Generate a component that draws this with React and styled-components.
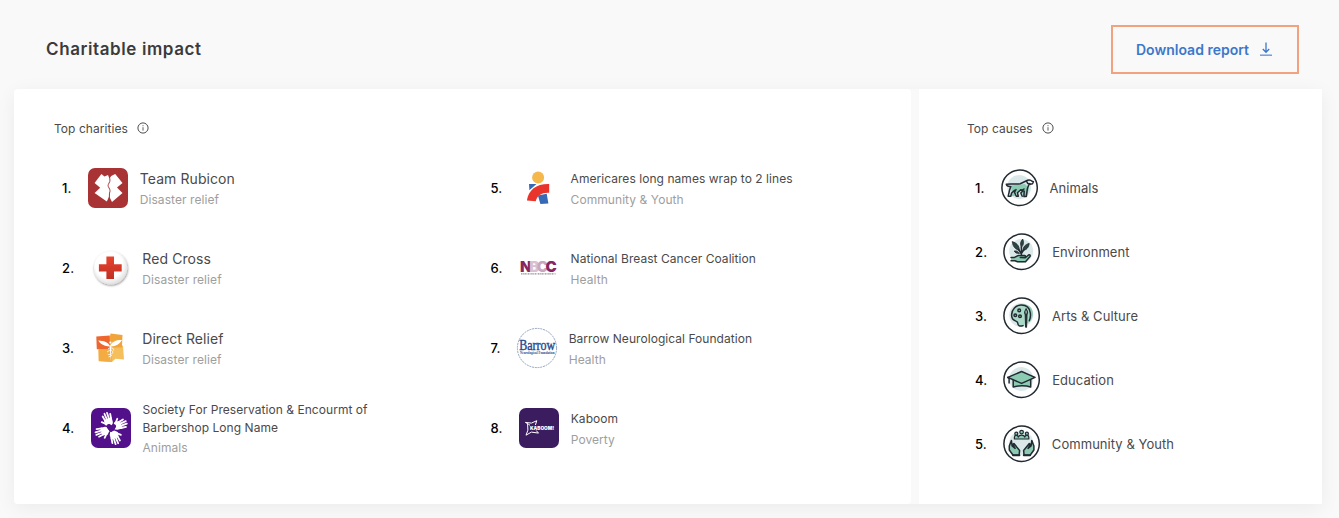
import React from "react";
import styled, { createGlobalStyle } from "styled-components";

const GlobalStyle = createGlobalStyle`
  * { box-sizing: border-box; }
  body {
    margin: 0;
    background: #f9f9f9;
    font-family: Inter, "Liberation Sans", sans-serif;
    color: #4a4a4a;
  }
`;

const Page = styled.main`
  height: 518px;
  padding: 25px 17px 0 14px;
  overflow: hidden;
`;

const Header = styled.header`
  display: flex;
  align-items: center;
  justify-content: space-between;
  height: 49px;
  padding: 0 23px 0 32px;
  margin-bottom: 15px;
`;

const Title = styled.h1`
  margin: 0 0 2px;
  font-size: 17px;
  line-height: 24px;
  font-weight: 600;
  letter-spacing: 0.6px;
  color: #3b3b3b;
`;

const DownloadButton = styled.button`
  display: flex;
  align-items: center;
  gap: 10px;
  width: 188px;
  height: 49px;
  padding: 0 0 0 23px;
  border: 2px solid #f2a27e;
  background: transparent;
  font: 600 14px/20px Inter, "Liberation Sans", sans-serif;
  letter-spacing: 0.01px;
  color: #3b77cb;
`;

const Panels = styled.div`
  display: flex;
  gap: 8px;
  height: 415px;
  border-radius: 4px 0 0 4px;
  box-shadow: 0 4px 20px rgba(0, 0, 0, 0.06);
`;

const Panel = styled.section`
  flex: 0 0 ${(p) => p.$width}px;
  padding: 29px 0 0 ${(p) => p.$inset}px;
  border-radius: ${(p) => p.$radius || 0}px;
  background: #fff;
`;

const PanelTitle = styled.h2`
  display: flex;
  align-items: center;
  gap: 9px;
  height: 20px;
  margin: 0 0 10px;
  font-size: 12px;
  font-weight: 400;
  letter-spacing: 0.05px;
  color: #4a4a4a;
`;

const Columns = styled.div`
  display: flex;
`;

const List = styled.ol`
  width: ${(p) => p.$width}px;
  margin: 0;
  padding: 0 0 0 8px;
  list-style: none;
`;

const Row = styled.li`
  display: flex;
  align-items: center;
  height: ${(p) => p.$height}px;
`;

const Rank = styled.span`
  margin-right: ${(p) => p.$gap || 16.3}px;
  font-size: 13px;
  font-weight: 500;
  letter-spacing: 0.1px;
  color: #000;
`;

const Logo = styled.svg`
  flex: none;
  display: block;
  width: ${(p) => p.$size}px;
  height: ${(p) => p.$size}px;
  margin-right: ${(p) => p.$gap}px;
  overflow: visible;
`;

const Details = styled.div`
  display: flex;
  flex-direction: column;
  gap: ${(p) => (p.$tight ? 2 : 3)}px;
  padding-top: 2px;
`;

const Name = styled.span`
  font-size: ${(p) => (p.$large ? 14 : 12)}px;
  line-height: 18px;
  letter-spacing: ${(p) => (p.$large ? 0.08 : 0.05)}px;
  white-space: pre-line;
  color: #4a4a4a;
`;

const Category = styled.span`
  font-size: 12px;
  line-height: 18px;
  letter-spacing: 0.07px;
  color: #9e9e9e;
`;

const CauseName = styled.span`
  font-size: 13px;
  line-height: 18px;
  letter-spacing: 0.05px;
  color: #4a4a4a;
`;

const DownloadIcon = () => (
  <svg width="14" height="16" viewBox="0 0 14 16" fill="none" stroke="#3b77cb">
    <path d="M7 .5v9.8M3.8 7 7 10.3 10.2 7" strokeWidth="1.3" />
    <path d="M1 13.2h12" stroke="#6f9fdb" strokeWidth="1.5" />
  </svg>
);

const InfoIcon = () => (
  <svg width="12" height="12" viewBox="0 0 12 12" fill="none" stroke="#4d4d4d">
    <circle cx="6" cy="6" r="5.1" />
    <path d="M6 5.2v3.4M6 3.2v1" strokeWidth="0.9" />
  </svg>
);

const Rubicon = () => (
  <>
    <rect width="40" height="40" rx="7" fill="#a93235" />
    <path
      fill="#fff"
      d="M13.4 6 16.5 8.4 20 7l1.4 3.4L23.2 8l4-2L34.5 15 29 19.6l5.5 5.4L24 34l-2.8-5.4-2.4 5L6.6 25l5.6-5.2L6.6 15z"
    />
    <path
      d="M21.5 8.5c.3 3.6 1 4-.5 6.6-1.2 2.2-1.2 2.8 0 4.8 1.3 2.2 1.2 3.4.5 5.2l-.3 7"
      fill="none"
      stroke="#a93235"
      strokeWidth="1"
    />
  </>
);

const RedCross = () => (
  <>
    <defs>
      <radialGradient id="badge" cx="45%" cy="40%" r="58%">
        <stop offset="70%" stopColor="#fff" />
        <stop offset="100%" stopColor="#e2e2e2" />
      </radialGradient>
      <linearGradient id="cross" x1="0" y1="0" x2="0" y2="1">
        <stop stopColor="#e8432f" />
        <stop offset="1" stopColor="#bf3022" />
      </linearGradient>
      <filter id="badgeShadow" x="-20%" y="-20%" width="150%" height="150%">
        <feDropShadow dx=".5" dy="1" stdDeviation=".8" floodOpacity=".45" />
      </filter>
    </defs>
    <circle cx="20.6" cy="20" r="16.6" fill="url(#badge)" filter="url(#badgeShadow)" />
    <path
      fill="url(#cross)"
      d="M16.4 8.5h7.6v7.7h7.7v7.2H24V31h-7.6v-7.6H8.9v-7.2h7.5z"
    />
  </>
);

const DirectRelief = () => (
  <>
    <path fill="#f6bf5e" d="M8.5 18 33 17.5 34 31.5l-8.5-.8L22 34 8.8 33.2z" />
    <path fill="#f0a43a" d="m20.5 5.5 12 1.6-.6 12.4H18z" />
    <path fill="#f3ac42" d="M8.5 22h13.2v11.9L8.8 33z" />
    <path fill="#ee652e" d="m6.3 8.5 13.5-1v13.8H6.8z" />
    <path
      fill="#fff"
      d="M8.2 12.5c6 .2 10 1.8 11.8 5.4 2-4.2 6-6.1 12-5.9-2.4 4-6 6.3-10.8 6.5l-.5 14.8-1-14.8c-5-.2-9.3-2.2-11.5-6z"
    />
    <path d="M17 24c4-3 6.5-1 5.5 1s-4 2.1-4.8 1M18 20.8c3.3-2 6.2-.6 5.5 1.6M18.5 29l3.5-1.6" fill="none" stroke="#fff" strokeWidth=".8" />
    <circle cx="20.3" cy="14.5" r="1.1" fill="#fff" />
  </>
);

const Hand = ({ angle }) => (
  <g
    transform={`translate(20.3 20.5) rotate(${angle})`}
    fill="none"
    stroke="#fff"
    strokeWidth="1.8"
    strokeLinecap="round"
  >
    <path d="M-3.1-9-4-14.2M-1.1-9.5-1.4-16.2M1.1-9.5 1.3-16.2M3.1-9 4-14.2M-3-5.6-6.8-9.2" />
    <path fill="#fff" stroke="none" d="M-4-10.5h8l-.3 5L2.2-2.8h-4.2l-2.8-2.6z" />
  </g>
);

const Barbershop = () => (
  <>
    <rect width="40" height="40" rx="7" fill="#53108b" />
    {[-20, 68, 160, 252].map((angle) => (
      <Hand key={angle} angle={angle} />
    ))}
    <path fill="#53108b" d="M20.3 17.4c1.7-2.4 5-1.4 4.8 1-.2 1.8-2.1 3.5-4.8 5.7-2.7-2.2-4.6-3.9-4.8-5.7-.2-2.4 3.1-3.4 4.8-1z" />
  </>
);

const Americares = () => (
  <>
    <circle cx="19.1" cy="9.5" r="6" fill="#f5b84d" />
    <path fill="#3869b5" d="M10 16h7.5l-7.1 6.3zM18.9 27.4l8.8-1.6 1.7 9.8-8 .5z" />
    <path fill="#e9342c" d="M30.2 16v8.7c-7.5-.4-11.8 2.5-13.5 8.5l-8.8-.7C9.6 21.8 17.3 15.7 30.2 16z" />
  </>
);

const Nbcc = () => (
  <>
    <text
      x="1"
      y="23.9"
      fontFamily="Inter, sans-serif"
      fontSize="15"
      fontWeight="900"
      letterSpacing="-2.4"
    >
      <tspan fill="#87265f">N</tspan>
      <tspan fill="#dbc0d1">B</tspan>
      <tspan fill="#cba7bd">C</tspan>
      <tspan fill="#87265f">C</tspan>
    </text>
    <path d="M2 25.8h34.5" stroke="#9b8994" strokeWidth="1.2" strokeDasharray="1.5 .5 .8 .6" />
  </>
);

const Barrow = () => (
  <g fill="#27488b" fontFamily='"Liberation Serif", serif'>
    <circle cx="20" cy="20" r="19.6" fill="#fff" stroke="#788daf" strokeWidth=".8" strokeDasharray="2 .8" />
    <text x="2.2" y="22" fontSize="14" stroke="#27488b" strokeWidth=".4" textLength="36" lengthAdjust="spacingAndGlyphs">Barrow</text>
    <text x="3" y="26.2" fontSize="4" fontWeight="700" textLength="34.5" lengthAdjust="spacingAndGlyphs">Neurological Foundation</text>
  </g>
);

const Kaboom = () => (
  <>
    <rect width="40" height="40" rx="7" fill="#3a1c5f" />
    <path d="M11 17.3 9.2 16l-2.8-1.6 6 .7 5.4-2.4-1.4 4.3M8.6 16l.3 6.2-1.9 5 5.4-3.1 7.1 1-2.3-2.6" fill="none" stroke="#fff" strokeWidth="1" />
    <text x="11" y="22.4" fill="#fff" fontFamily="Inter, sans-serif" fontSize="5" fontWeight="900" textLength="24" lengthAdjust="spacingAndGlyphs">KABOOM!</text>
  </>
);

const CauseRing = ({ children }) => (
  <>
    <circle cx="18.6" cy="18.8" r="17.7" fill="#fff" stroke="#222a32" strokeWidth="1.5" />
    <circle cx="18.2" cy="18" r="12" fill="#dbe8ea" />
    <g fill="none" stroke="#222a32" strokeWidth="1.5" strokeLinejoin="round" strokeLinecap="round">
      {children}
    </g>
  </>
);

const Animals = () => (
  <CauseRing>
    <path fill="#8bcbb2" stroke="none" d="M10 16.5 24 15l4 4-2 9h-3l-3-6-4 1-2 4h-3z" />
    <path d="M5.3 15.2c5-.3 10 .2 14-.4l6.2-3c1.4-1.2 4.3-1 5.3.3l1.6.7-.9 1.9-3.6.9-1.5 3.9-1.1 7.9h-2.4l.3-5.2-3.6-1.5M5.3 15.2c.3 1.8 1.8 2.4 4.5 2.2L8.6 21l-1.4 6.2h2.6l.8-3.2 3-2.8M15 20.6l-1.5 2.6 1.8 4h2l-.9-3.4 2.8-2.6c1.5.3 2.6-.2 3.8-1.2M21.5 22.2 19.8 24l1.4 3.2M25.5 12l1.2 2.4 2.2.3" />
  </CauseRing>
);

const Environment = () => (
  <CauseRing>
    <path fill="#8bcbb2" d="M8 24.4h3.5l4-2h6.2c1.1.3.9 2-.4 2.1h-4l5 .2 3.2-2.7c1.5-.8 2.2.6 1.3 1.8L22.5 28.7h-8l-2.5-1H8" />
    <path fill="#2c4540" strokeWidth=".8" d="M16.3 17.3c-4.2-1-6.3-3.6-7.1-8.7 4.6 1.5 7.2 3.9 7.1 8.7zM18.4 14.3c-1.5-3-.9-5.7 1.3-8.2 1.4 3.2 1.1 5.8-1.3 8.2zM19.8 17.6c.4-4 2.4-6.2 6.4-7.2-.6 4.2-2.4 6.4-6.4 7.2zM16 20.3c-2.5.3-3.8-.4-4.8-2.3 2.6-.4 4.2.3 4.8 2.3z" />
    <path d="M18.4 22v-8M18.4 21l-2.8-4.5M18.4 20.5l2.6-3.8" />
  </CauseRing>
);

const Arts = () => (
  <CauseRing>
    <path fill="#8bcbb2" stroke="none" d="M18 8c8-2 13 4 11.8 10.3-1 6-5 9-10.8 9.2z" />
    <path fill="#a9d9c7" d="M20 28.6c-3 1.2-5.2.2-5.2-2.4-.2-1.7-1.4-2-2.6-2.4-2.8-.8-3.7-2.8-3.6-6.1.2-5.2 4.2-9.4 9.2-9.6 5.5-.2 8.8 3.2 9.5 7.9.4 3.2 0 5.6-1 7.7" />
    <circle cx="16.2" cy="13.4" r="1.3" />
    <circle cx="12.3" cy="18.2" r="1.3" />
    <circle cx="17" cy="19.2" r="1.3" />
    <path fill="#222a32" strokeWidth="1" d="M23.1 12c1.8 1.9 2 4 .9 5.8l-.4 12.5h-1l-.4-12.5c-1-1.7-.7-3.9.9-5.8z" />
    <path d="M23.1 14v2.2" stroke="#dbe8ea" strokeWidth="1" />
  </CauseRing>
);

const Education = () => (
  <CauseRing>
    <path fill="#8bcbb2" d="M10.2 17v9c4.5-1.6 12.8-1.6 17.5 0v-9z" />
    <path fill="#8bcbb2" d="m4.8 16.4 13.8-5.9L32 16.4l-13.4 6z" />
    <path d="m4.8 16.4 1.3 1.2v4.5" />
  </CauseRing>
);

const Community = () => (
  <CauseRing>
    <path fill="#8bcbb2" d="M8.4 15.4 6.3 21v4l3.8 5.3h6l.5-4.8-5.7-7-1 .9 2.2 4-3-2.4zM28.8 15.4l2.1 5.6v4l-3.8 5.3h-6l-.5-4.8 5.7-7 1 .9-2.2 4 3-2.4z" />
    <path d="M10.1 30.3h6.3M20.8 30.3h6.3" strokeWidth="2" />
    <g fill="#8bcbb2" strokeWidth="1.2">
      <path d="M11.4 14v-1.8c0-2.4 3.6-2.4 3.9 0 .5-2.8 6-2.8 6.5 0 .3-2.4 4-2.4 4 0V14z" />
      <circle cx="13.3" cy="8.7" r="1.5" />
      <circle cx="18.6" cy="7.1" r="1.8" />
      <circle cx="23.9" cy="8.7" r="1.5" />
    </g>
  </CauseRing>
);

const charityColumns = [
  {
    width: 428.5,
    start: 1,
    rows: [
      { name: "Team Rubicon", category: "Disaster relief", Art: Rubicon, large: true },
      { name: "Red Cross", category: "Disaster relief", Art: RedCross, large: true },
      { name: "Direct Relief", category: "Disaster relief", Art: DirectRelief, large: true },
      {
        name: "Society For Preservation & Encourmt of\nBarbershop Long Name",
        category: "Animals",
        Art: Barbershop,
        tight: true,
      },
    ],
  },
  {
    width: 420,
    start: 5,
    rows: [
      { name: "Americares long names wrap to 2 lines", category: "Community & Youth", Art: Americares },
      { name: "National Breast Cancer Coalition", category: "Health", Art: Nbcc },
      { name: "Barrow Neurological Foundation", category: "Health", Art: Barrow },
      { name: "Kaboom", category: "Poverty", Art: Kaboom },
    ],
  },
];

const causes = [
  { name: "Animals", Art: Animals },
  { name: "Environment", Art: Environment },
  { name: "Arts & Culture", Art: Arts },
  { name: "Education", Art: Education },
  { name: "Community & Youth", Art: Community },
];

const CausesList = styled(List)`
  padding-top: 8px;
`;

export default function App() {
  return (
    <>
      <GlobalStyle />
      <Page>
        <Header>
          <Title>Charitable impact</Title>
          <DownloadButton>
            Download report
            <DownloadIcon />
          </DownloadButton>
        </Header>
        <Panels>
          <Panel $width={897} $inset={40} $radius={4}>
            <PanelTitle>
              Top charities
              <InfoIcon />
            </PanelTitle>
            <Columns>
              {charityColumns.map(({ width, start, rows }) => (
                <List key={start} $width={width}>
                  {rows.map(({ name, category, Art, large, tight }, i) => (
                    <Row key={name} $height={80}>
                      <Rank>{start + i}.</Rank>
                      <Logo $size={40} $gap={11.9} viewBox="0 0 40 40">
                        <Art />
                      </Logo>
                      <Details $tight={tight}>
                        <Name $large={large}>{name}</Name>
                        <Category>{category}</Category>
                      </Details>
                    </Row>
                  ))}
                </List>
              ))}
            </Columns>
          </Panel>
          <Panel $width={403} $inset={48}>
            <PanelTitle>
              Top causes
              <InfoIcon />
            </PanelTitle>
            <CausesList $width={340}>
              {causes.map(({ name, Art }, i) => (
                <Row key={name} $height={64}>
                  <Rank $gap={16}>{i + 1}.</Rank>
                  <Logo $size={38} $gap={11} viewBox="0 0 38 38">
                    <Art />
                  </Logo>
                  <CauseName>{name}</CauseName>
                </Row>
              ))}
            </CausesList>
          </Panel>
        </Panels>
      </Page>
    </>
  );
}
